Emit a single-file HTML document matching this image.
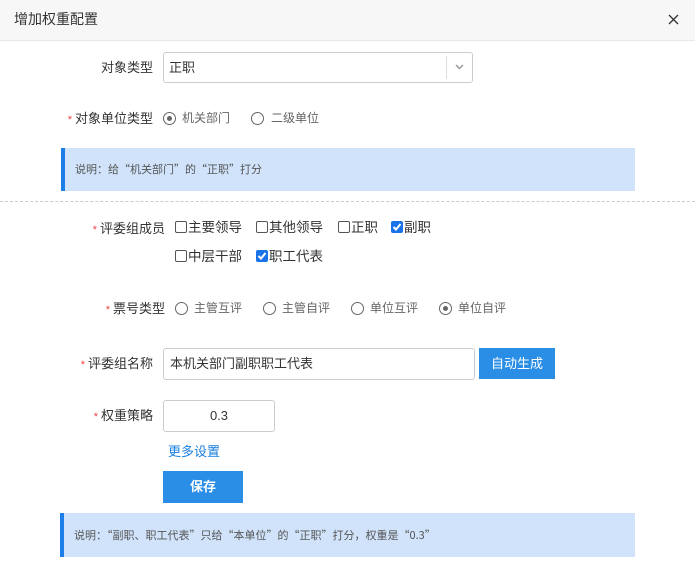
<!DOCTYPE html>
<html><head><meta charset="utf-8"><style>
*{margin:0;padding:0;box-sizing:border-box}
body{width:695px;height:577px;background:#fff;font-family:"Liberation Sans","Noto Sans CJK SC",sans-serif;color:#333;position:relative;overflow:hidden;font-size:13px}
.a{position:absolute;white-space:nowrap}
.hdr{left:0;top:0;width:695px;height:41px;background:#f7f7f7;border-bottom:1px solid #e8e8e8}
.lbl{font-size:13px;color:#333;text-align:right;line-height:16px}
.star{color:#e44;font-size:11px;margin-right:3px}
.radio{width:13px;height:13px;border:1.5px solid #666;border-radius:50%}
.radio.on::after{content:"";position:absolute;left:2.5px;top:2.5px;width:5px;height:5px;border-radius:50%;background:#666}
.rt{font-size:12px;color:#666;line-height:14px}
.cb{width:12px;height:12px;border:1px solid #555;border-radius:2px;background:#fff}
.cb.on{background:#1a73e8;border-color:#1a73e8}
.info{background:#d0e3fa;border-left:4px solid #1e7ee8;font-size:11px;color:#555;line-height:43px;padding-left:10px;font-family:"Noto Sans CJK SC","Liberation Sans",sans-serif}
.inp{border:1px solid #ccc;border-radius:3px;background:#fff}
.btn{background:#2a8de6;color:#fff;text-align:center}
</style></head><body>
<div class="a hdr"></div>
<div class="a" style="left:14px;top:10px;font-size:14px;color:#333;line-height:18px">增加权重配置</div>
<svg class="a" style="left:668px;top:14px" width="11" height="11"><path d="M1 1L10 10M10 1L1 10" stroke="#333" stroke-width="1.3"/></svg>

<div class="a lbl" style="left:60px;width:93px;top:60px">对象类型</div>
<div class="a inp" style="left:163px;top:52px;width:310px;height:31px"></div>
<div class="a" style="left:169px;top:60px;font-size:13px;line-height:16px;color:#333">正职</div>
<div class="a" style="left:446px;top:56px;width:1px;height:23px;background:#ddd"></div>
<svg class="a" style="left:455px;top:64px" width="9" height="6"><path d="M1 1L4.5 4.5L8 1" stroke="#999" stroke-width="1.5" fill="none"/></svg>

<div class="a lbl" style="left:40px;width:113px;top:111px"><span class="star">*</span>对象单位类型</div>
<div class="a radio on" style="left:163px;top:112px"></div>
<div class="a rt" style="left:182px;top:111px">机关部门</div>
<div class="a radio" style="left:251px;top:112px"></div>
<div class="a rt" style="left:271px;top:111px">二级单位</div>

<div class="a info" style="left:61px;top:148px;width:574px;height:43px">说明：给“机关部门”的“正职”打分</div>
<div class="a" style="left:0;top:201px;width:695px;border-top:1px dashed #ccc"></div>

<div class="a lbl" style="left:60px;width:105px;top:221px"><span class="star">*</span>评委组成员</div>
<div class="a cb" style="left:175px;top:221px"></div><div class="a" style="left:188px;top:220px;line-height:16px;font-size:13.5px">主要领导</div>
<div class="a cb" style="left:256px;top:221px"></div><div class="a" style="left:269px;top:220px;line-height:16px;font-size:13.5px">其他领导</div>
<div class="a cb" style="left:338px;top:221px"></div><div class="a" style="left:351px;top:220px;line-height:16px;font-size:13.5px">正职</div>
<div class="a cb on" style="left:391px;top:221px"><svg width="12" height="12" style="position:absolute;left:-1px;top:-1px"><path d="M2.5 6L5 8.5L9.5 3" stroke="#fff" stroke-width="2" fill="none"/></svg></div><div class="a" style="left:404px;top:220px;line-height:16px;font-size:13.5px">副职</div>
<div class="a cb" style="left:175px;top:250px"></div><div class="a" style="left:188px;top:249px;line-height:16px;font-size:13.5px">中层干部</div>
<div class="a cb on" style="left:256px;top:250px"><svg width="12" height="12" style="position:absolute;left:-1px;top:-1px"><path d="M2.5 6L5 8.5L9.5 3" stroke="#fff" stroke-width="2" fill="none"/></svg></div><div class="a" style="left:269px;top:249px;line-height:16px;font-size:13.5px">职工代表</div>

<div class="a lbl" style="left:60px;width:105px;top:301px"><span class="star">*</span>票号类型</div>
<div class="a radio" style="left:175px;top:302px"></div><div class="a rt" style="left:194px;top:301px">主管互评</div>
<div class="a radio" style="left:263px;top:302px"></div><div class="a rt" style="left:282px;top:301px">主管自评</div>
<div class="a radio" style="left:351px;top:302px"></div><div class="a rt" style="left:370px;top:301px">单位互评</div>
<div class="a radio on" style="left:439px;top:302px"></div><div class="a rt" style="left:458px;top:301px">单位自评</div>

<div class="a lbl" style="left:50px;width:103px;top:356px"><span class="star">*</span>评委组名称</div>
<div class="a inp" style="left:163px;top:348px;width:312px;height:32px"></div>
<div class="a" style="left:170px;top:356px;line-height:16px">本机关部门副职职工代表</div>
<div class="a btn" style="left:479px;top:348px;width:76px;height:31px;line-height:31px;font-size:13px">自动生成</div>

<div class="a lbl" style="left:60px;width:93px;top:408px"><span class="star">*</span>权重策略</div>
<div class="a inp" style="left:163px;top:400px;width:112px;height:32px;text-align:center;line-height:30px">0.3</div>
<div class="a" style="left:168px;top:444px;color:#1a7fe0;line-height:16px">更多设置</div>
<div class="a btn" style="left:163px;top:471px;width:80px;height:32px;line-height:32px;font-weight:bold">保存</div>

<div class="a info" style="left:60px;top:513px;width:575px;height:44px;line-height:44px">说明：“副职、职工代表”只给“本单位”的“正职”打分，权重是“0.3”</div>
</body></html>
